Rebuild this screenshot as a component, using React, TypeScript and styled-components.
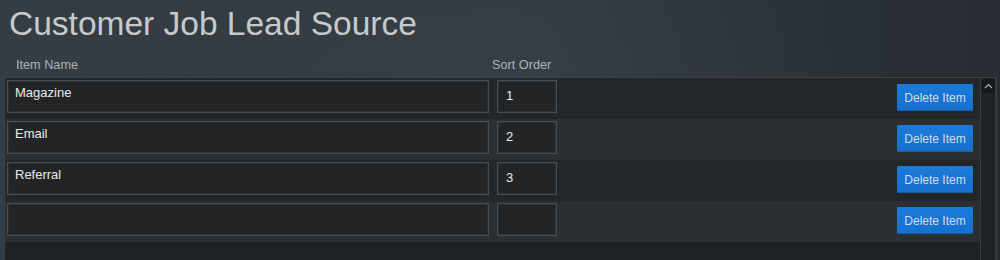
import styled, { createGlobalStyle } from 'styled-components';

const GlobalStyle = createGlobalStyle`
    html, body {
        margin: 0;
        padding: 0;
        height: 260px;
        overflow: hidden;
    }
    body {
        font-family: "Liberation Sans", Arial, sans-serif;
        background:
            radial-gradient(ellipse 520px 420px at 520px 180px, rgba(70, 80, 88, 0.25), rgba(0, 0, 0, 0) 70%),
            linear-gradient(90deg, #353d44 0%, #333b42 55%, #2b3238 80%, #262c31 100%);
    }
`;

const Page = styled.div`
    padding: 5px 3px 0 4px;
    height: 255px;
    display: flex;
    flex-direction: column;
`;

const Title = styled.h1`
    margin: 0 0 0 5px;
    font-size: 33.5px;
    font-weight: normal;
    line-height: 37px;
    color: #c6cacd;
`;

const HeaderRow = styled.div`
    display: flex;
    margin-top: 16px;
    height: 19px;
    font-size: 12.7px;
    line-height: 14px;
    color: #aeb3b7;
`;

const HeaderLabel = styled.div<{ $width: number; $indent: number }>`
    width: ${p => p.$width}px;
    padding-left: ${p => p.$indent}px;
    box-sizing: border-box;
`;

const Table = styled.div`
    flex: 1;
    display: flex;
    border: 1px solid #3b4045;
    border-bottom: none;
    background: #1f2225;
`;

const Rows = styled.div`
    flex: 1;
    display: flex;
    flex-direction: column;
`;

const Row = styled.div<{ $alt: boolean }>`
    display: flex;
    align-items: flex-start;
    height: 41px;
    padding: 2px 7px 0 2px;
    box-sizing: border-box;
    background: ${p => (p.$alt ? '#2c2f31' : '#242729')};
`;

const Field = styled.div<{ $width: number }>`
    width: ${p => p.$width}px;
    height: 33px;
    box-sizing: border-box;
    border: 1px solid #4a4d50;
    box-shadow: inset 0 0 0 1px #2e3134;
    background: #222426;
    color: #eaeaea;
    font-size: 13px;
    line-height: 15px;
    padding: 4px 7px;
`;

const SortField = styled(Field)`
    margin-left: 8px;
    padding: 7px 8px;
`;

const DeleteButton = styled.button`
    margin-left: auto;
    margin-top: 4px;
    width: 76px;
    height: 27px;
    border: none;
    border-radius: 1px;
    background: linear-gradient(180deg, #1c7ad9 0%, #1670cc 100%);
    box-shadow: inset 0 -1px 0 #135fae;
    color: #d0dcea;
    font-family: "Liberation Sans", Arial, sans-serif;
    font-size: 12px;
    padding: 0;
    cursor: pointer;
`;

const Scrollbar = styled.div`
    width: 14px;
    border-left: 1px solid #3a3e42;
    border-right: 1px solid #33373b;
    background: #202326;
    display: flex;
    flex-direction: column;
    align-items: center;
`;

const ScrollUp = styled.div`
    margin-top: 1px;
    width: 13px;
    height: 14px;
    background: #16191c;
    display: flex;
    align-items: center;
    justify-content: center;
`;

const items = [
    { name: 'Magazine', order: '1' },
    { name: 'Email', order: '2' },
    { name: 'Referral', order: '3' },
    { name: '', order: '' },
];

export default function App() {
    return (
        <>
            <GlobalStyle />
            <Page>
                <Title>Customer Job Lead Source</Title>
                <HeaderRow>
                    <HeaderLabel $width={484} $indent={12}>Item Name</HeaderLabel>
                    <HeaderLabel $width={100} $indent={4}>Sort Order</HeaderLabel>
                </HeaderRow>
                <Table>
                    <Rows>
                        {items.map((item, i) => (
                            <Row key={i} $alt={i % 2 === 1}>
                                <Field $width={482}>{item.name}</Field>
                                <SortField $width={60}>{item.order}</SortField>
                                <DeleteButton>Delete Item</DeleteButton>
                            </Row>
                        ))}
                    </Rows>
                    <Scrollbar>
                        <ScrollUp>
                            <svg width="9" height="6" viewBox="0 0 9 6">
                                <path d="M1 5 L4.5 1.5 L8 5" fill="none" stroke="#a9aeb2" strokeWidth="1.2" />
                            </svg>
                        </ScrollUp>
                    </Scrollbar>
                </Table>
            </Page>
        </>
    );
}
